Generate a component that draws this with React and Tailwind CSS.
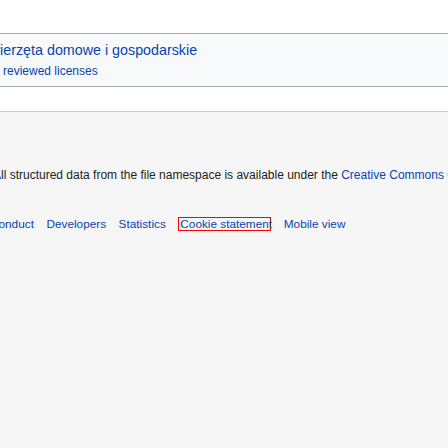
export default function App() {
  return (
    <div className="w-[448px] h-[448px] overflow-hidden bg-white font-['Liberation_Sans',Arial,sans-serif] flex flex-col">
      <div className="h-[33px] shrink-0" />
      <div className="h-[54px] shrink-0 border-y border-[#a2a9b1] bg-[#f8f9fa] overflow-hidden pt-[8px] whitespace-nowrap">
        <div className="text-[14.3px] leading-[17px] text-[#0645ad] ml-[-19px]">Zwierzęta domowe i gospodarskie</div>
        <div className="text-[12px] leading-[14px] text-[#0645ad] ml-[3px] mt-[5px]">reviewed licenses</div>
      </div>
      <div className="h-[24px] shrink-0" />
      <div className="flex-1 border-t border-[#a7d7f9] bg-[#f6f6f6] overflow-hidden whitespace-nowrap pt-[55px] text-[11.8px]">
        <div className="leading-[16px] text-[12px] text-[#222222] ml-[-7px]">
          All structured data from the file namespace is available under the{" "}
          <span className="text-[#0645ad]">Creative Commons</span> CC0 License
        </div>
        <div className="mt-[34px] h-[14px] flex items-center gap-[12.5px] leading-[14px] text-[#0645ad] ml-[-52px]">
          <span>Code of conduct</span>
          <span>Developers</span>
          <span>Statistics</span>
          <span className="inline-block w-[93px] h-[14px] border border-[#ff0000] leading-[12px] pl-[1px] overflow-visible">Cookie statement</span>
          <span>Mobile view</span>
        </div>
      </div>
    </div>
  );
}
